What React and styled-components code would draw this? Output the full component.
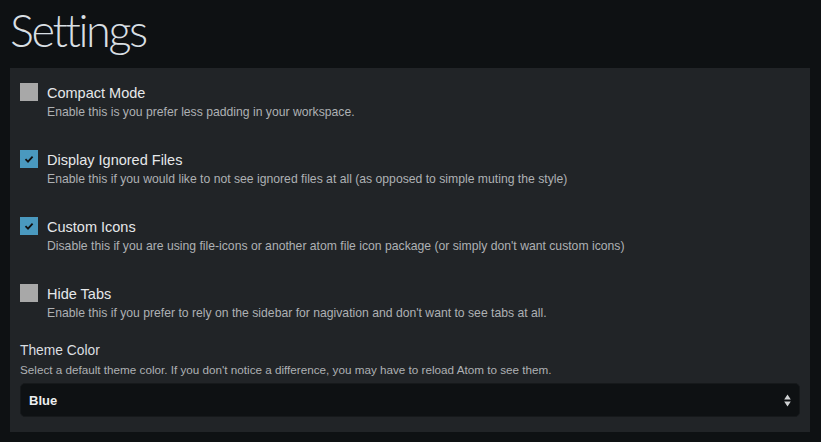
import React from "react";
import styled, { createGlobalStyle } from "styled-components";

const GlobalStyle = createGlobalStyle`
  html, body {
    margin: 0;
    padding: 0;
    background: #0e1113;
  }
  body {
    font-family: "Liberation Sans", Arial, sans-serif;
  }
`;

const Page = styled.div`
  width: 821px;
  height: 442px;
  overflow: hidden;
  background: #0e1113;
  padding: 0 11px 0 10px;
  box-sizing: border-box;
`;

const Title = styled.h1`
  margin: 0;
  padding-top: 5px;
  height: 68px;
  box-sizing: border-box;
  font-family: Lato, Roboto, "Liberation Sans", sans-serif;
  font-weight: 300;
  font-size: 45px;
  line-height: 50px;
  color: #d8dfe3;
  letter-spacing: -2.4px;
`;

const Panel = styled.section`
  background: #212427;
  padding: 15px 10px 15px 10px;
  display: flex;
  flex-direction: column;
`;

const Row = styled.div`
  display: flex;
  align-items: flex-start;
  gap: 9px;
  height: 67px;
`;

const Box = styled.span`
  flex: none;
  width: 18px;
  height: 18px;
  background: ${(p) => (p.$checked ? "#4a99bf" : "#a8a8a8")};
  display: flex;
  align-items: center;
  justify-content: center;
`;

const Text = styled.div`
  display: flex;
  flex-direction: column;
`;

const Label = styled.div`
  font-size: 14.5px;
  line-height: 18px;
  color: #e6e8ea;
  margin-top: 1px;
`;

const Desc = styled.div`
  font-size: ${(p) => p.$size || 12.2}px;
  line-height: 16px;
  margin-top: 2px;
  color: #aeb1b4;
`;

const Field = styled.div`
  display: flex;
  flex-direction: column;
  margin-top: -9px;
`;

const FieldLabel = styled(Label)`
  margin-top: 0;
  font-size: 13.8px;
  color: #dcdfe1;
`;

const Select = styled.div`
  margin-top: 5px;
  height: 34px;
  box-sizing: border-box;
  border: 1px solid #16191b;
  border-radius: 5px;
  background: #0e1113;
  display: flex;
  align-items: center;
  justify-content: space-between;
  padding: 0 8px 0 8px;
  font-size: 13px;
  font-weight: bold;
  color: #eceef0;
`;

const Check = () => (
  <svg width="12" height="12" viewBox="0 0 12 12">
    <path d="M2.5 6.2 L5 8.6 L9.6 3.6" fill="none" stroke="#111" strokeWidth="1.8" />
  </svg>
);

const Arrows = () => (
  <svg width="7" height="13" viewBox="0 0 7 13">
    <path d="M3.5 0.5 L6.8 5.5 H0.2 Z M3.5 12.5 L6.8 7.5 H0.2 Z" fill="#cfd2d4" />
  </svg>
);

const options = [
  {
    label: "Compact Mode",
    desc: "Enable this is you prefer less padding in your workspace.",
    checked: false,
  },
  {
    label: "Display Ignored Files",
    desc: "Enable this if you would like to not see ignored files at all (as opposed to simple muting the style)",
    checked: true,
  },
  {
    label: "Custom Icons",
    desc: "Disable this if you are using file-icons or another atom file icon package (or simply don't want custom icons)",
    checked: true,
  },
  {
    label: "Hide Tabs",
    desc: "Enable this if you prefer to rely on the sidebar for nagivation and don't want to see tabs at all.",
    checked: false,
  },
];

export default function App() {
  return (
    <Page>
      <GlobalStyle />
      <Title>Settings</Title>
      <Panel>
        {options.map((o) => (
          <Row key={o.label}>
            <Box $checked={o.checked}>{o.checked && <Check />}</Box>
            <Text>
              <Label>{o.label}</Label>
              <Desc>{o.desc}</Desc>
            </Text>
          </Row>
        ))}
        <Field>
          <FieldLabel>Theme Color</FieldLabel>
          <Desc $size={11.7}>
            Select a default theme color. If you don't notice a difference, you may have to reload Atom to see them.
          </Desc>
          <Select>
            <span>Blue</span>
            <Arrows />
          </Select>
        </Field>
      </Panel>
    </Page>
  );
}
